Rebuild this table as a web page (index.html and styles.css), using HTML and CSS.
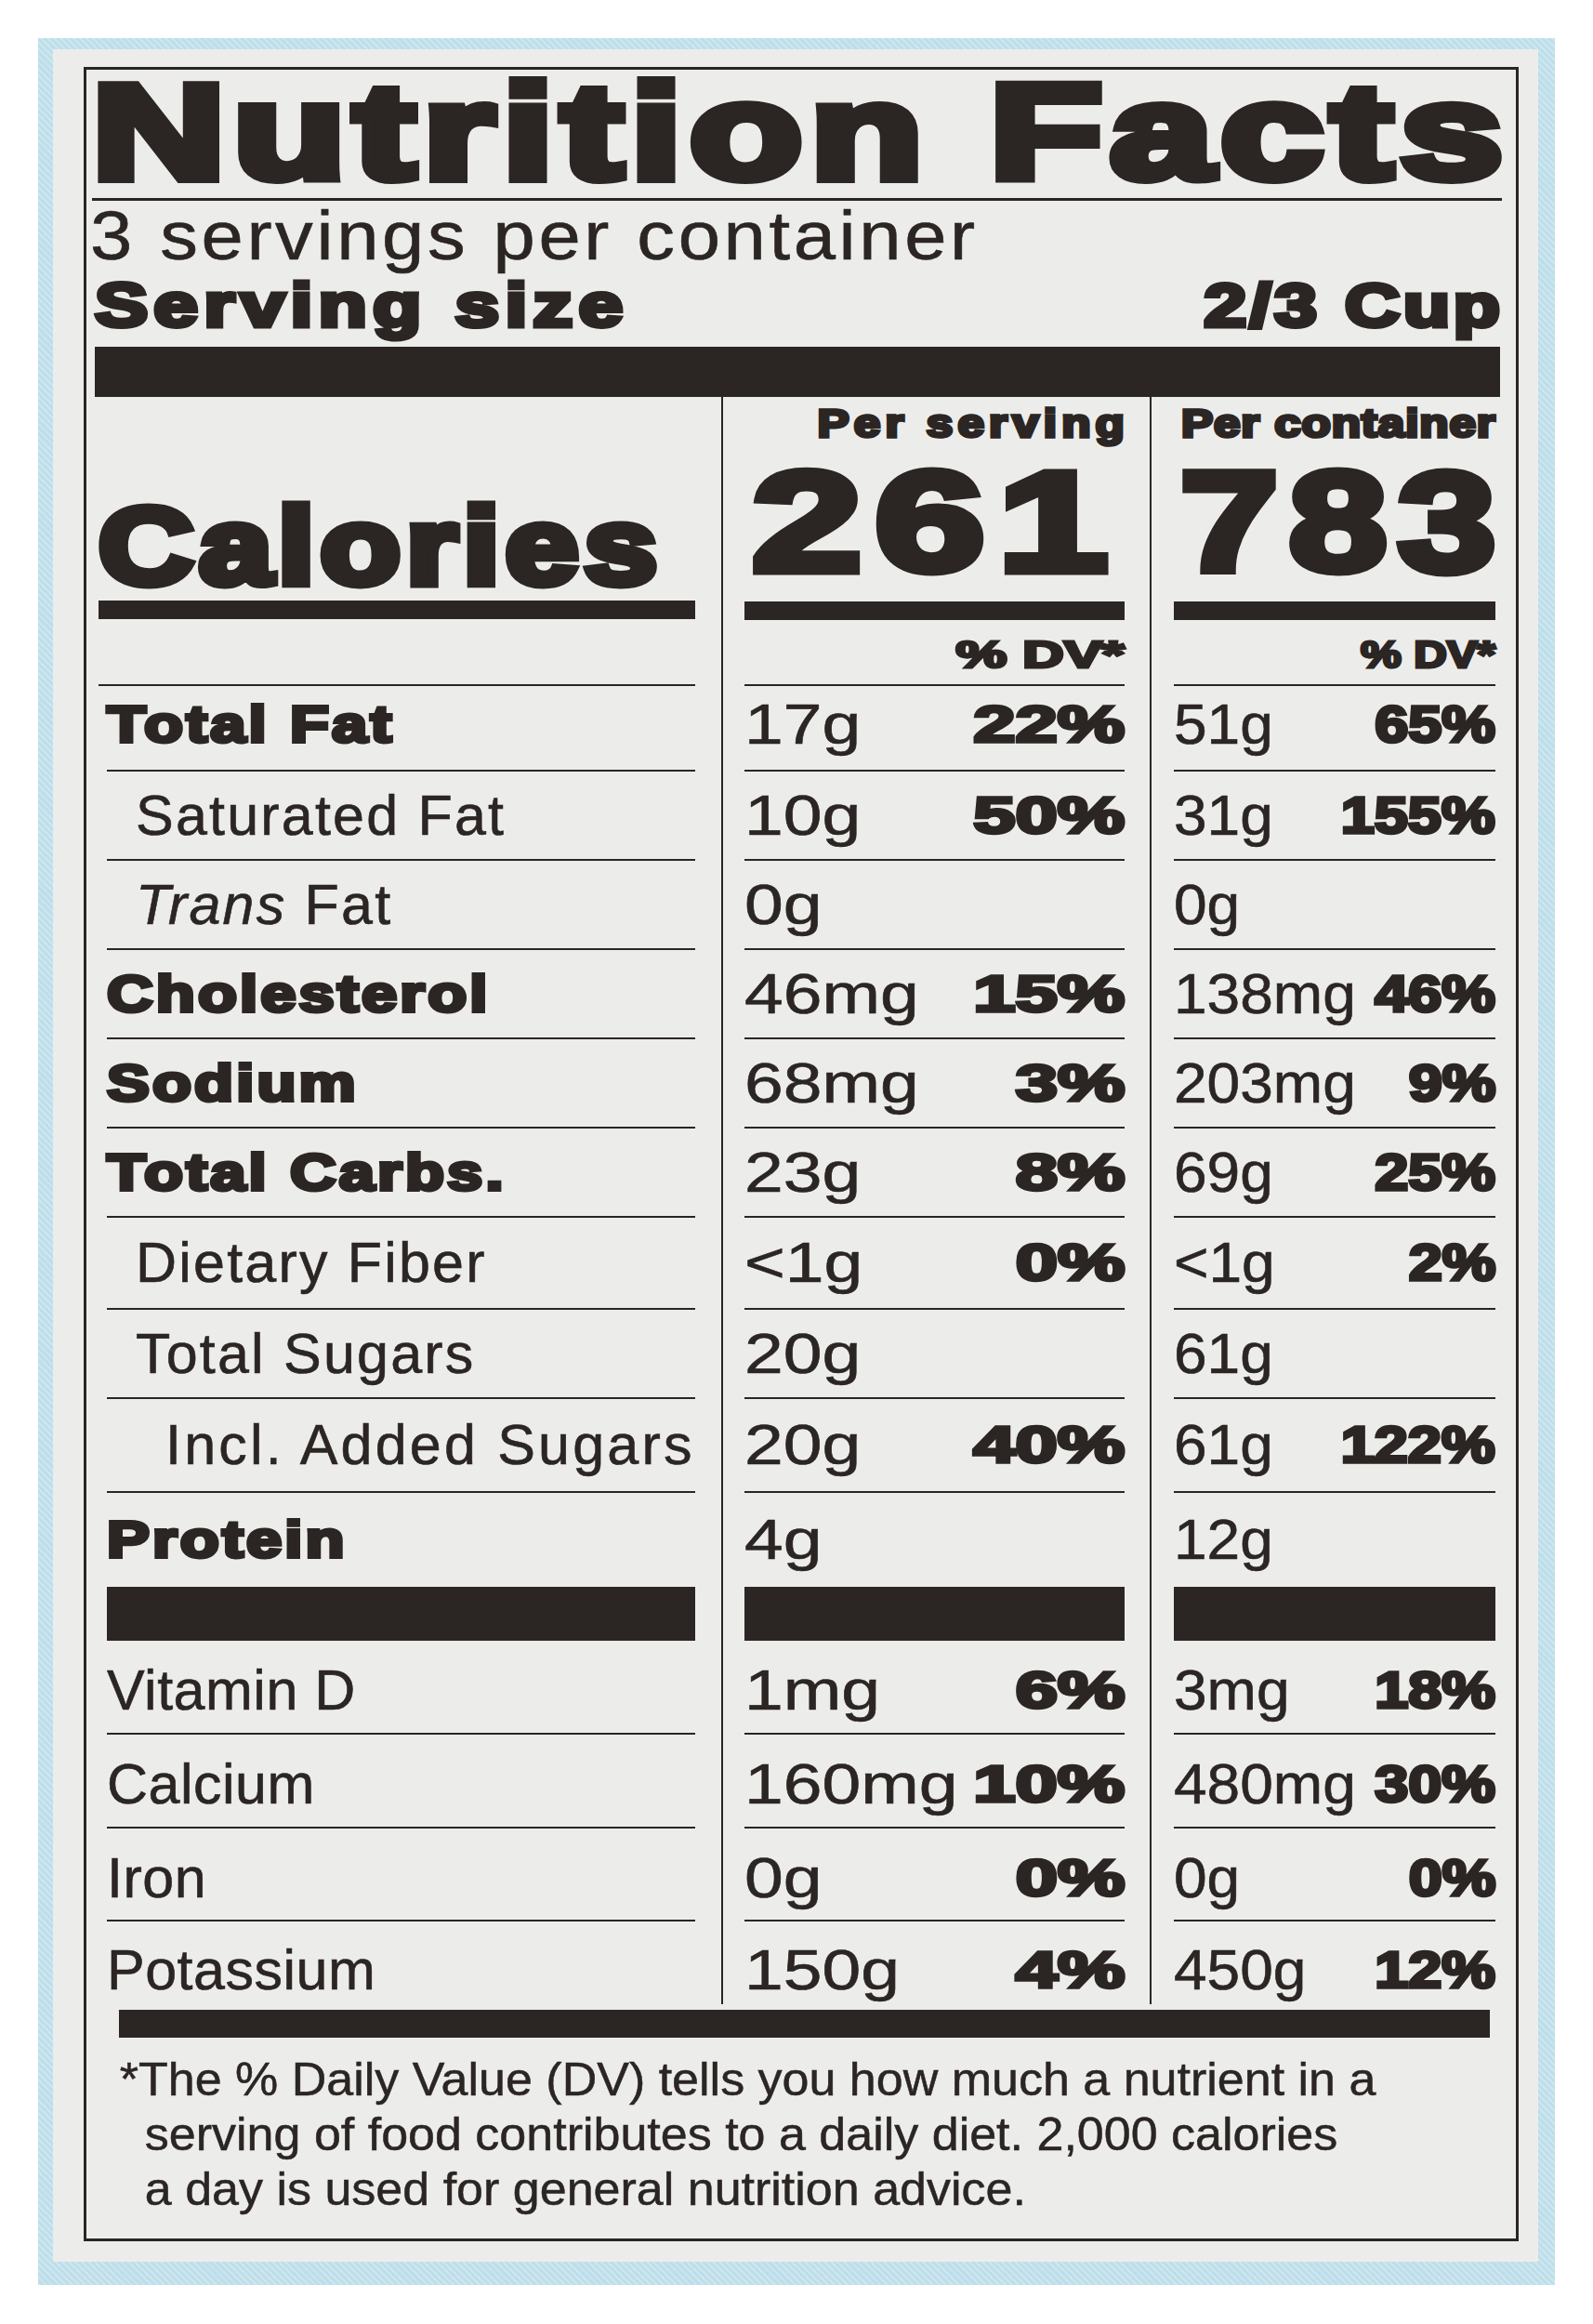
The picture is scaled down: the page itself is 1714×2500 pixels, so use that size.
FILE: index.html
```html
<!DOCTYPE html>
<html lang="en">
<head>
<meta charset="utf-8">
<title>Nutrition Facts</title>
<link rel="stylesheet" href="styles.css">
</head>
<body>
<main class="frame">
  <div class="panel">
    <section class="label">
      <h1 class="title"><span class="hv">Nutrition Facts</span></h1>
      <div class="rule"></div>
      <p class="servings"><span class="sx">3 servings per container</span></p>
      <div class="size">
        <span class="hv size-label">Serving size</span>
        <span class="hv r size-val">2/3 Cup</span>
      </div>
      <div class="bar-top"></div>

      <div class="table">
        <div class="row head">
          <div class="cell c1"><div class="in">
            <span class="hv cal">Calories</span>
            <div class="cal-bar"></div>
          </div></div>
          <div class="cell c2"><div class="in">
            <span class="hv r per">Per serving</span>
            <span class="hv num">261</span>
            <div class="cal-bar"></div>
            <span class="hv r dv">% DV*</span>
          </div></div>
          <div class="cell c3"><div class="in">
            <span class="hv r per">Per container</span>
            <span class="hv r num">783</span>
            <div class="cal-bar"></div>
            <span class="hv r dv">% DV*</span>
          </div></div>
        </div>

        <div class="row s">
          <div class="cell c1"><div class="in"><span class="hv nut">Total Fat</span></div></div>
          <div class="cell c2"><div class="in"><span class="v">17g</span><span class="hv r pct">22%</span></div></div>
          <div class="cell c3"><div class="in"><span class="v">51g</span><span class="hv r pct">65%</span></div></div>
        </div>
        <div class="row">
          <div class="cell c1"><div class="in"><span class="lbl sub">Saturated Fat</span></div></div>
          <div class="cell c2"><div class="in"><span class="v">10g</span><span class="hv r pct">50%</span></div></div>
          <div class="cell c3"><div class="in"><span class="v">31g</span><span class="hv r pct">155%</span></div></div>
        </div>
        <div class="row">
          <div class="cell c1"><div class="in"><span class="lbl sub"><i>Trans</i> Fat</span></div></div>
          <div class="cell c2"><div class="in"><span class="v">0g</span></div></div>
          <div class="cell c3"><div class="in"><span class="v">0g</span></div></div>
        </div>
        <div class="row">
          <div class="cell c1"><div class="in"><span class="hv nut">Cholesterol</span></div></div>
          <div class="cell c2"><div class="in"><span class="v">46mg</span><span class="hv r pct">15%</span></div></div>
          <div class="cell c3"><div class="in"><span class="v">138mg</span><span class="hv r pct">46%</span></div></div>
        </div>
        <div class="row">
          <div class="cell c1"><div class="in"><span class="hv nut">Sodium</span></div></div>
          <div class="cell c2"><div class="in"><span class="v">68mg</span><span class="hv r pct">3%</span></div></div>
          <div class="cell c3"><div class="in"><span class="v">203mg</span><span class="hv r pct">9%</span></div></div>
        </div>
        <div class="row">
          <div class="cell c1"><div class="in"><span class="hv nut">Total Carbs.</span></div></div>
          <div class="cell c2"><div class="in"><span class="v">23g</span><span class="hv r pct">8%</span></div></div>
          <div class="cell c3"><div class="in"><span class="v">69g</span><span class="hv r pct">25%</span></div></div>
        </div>
        <div class="row l">
          <div class="cell c1"><div class="in"><span class="lbl sub">Dietary Fiber</span></div></div>
          <div class="cell c2"><div class="in"><span class="v">&lt;1g</span><span class="hv r pct">0%</span></div></div>
          <div class="cell c3"><div class="in"><span class="v">&lt;1g</span><span class="hv r pct">2%</span></div></div>
        </div>
        <div class="row">
          <div class="cell c1"><div class="in"><span class="lbl sub">Total Sugars</span></div></div>
          <div class="cell c2"><div class="in"><span class="v">20g</span></div></div>
          <div class="cell c3"><div class="in"><span class="v">61g</span></div></div>
        </div>
        <div class="row xl">
          <div class="cell c1"><div class="in"><span class="lbl sub2">Incl. Added Sugars</span></div></div>
          <div class="cell c2"><div class="in"><span class="v">20g</span><span class="hv r pct">40%</span></div></div>
          <div class="cell c3"><div class="in"><span class="v">61g</span><span class="hv r pct">122%</span></div></div>
        </div>
        <div class="row xl nl">
          <div class="cell c1"><div class="in"><span class="hv nut">Protein</span></div></div>
          <div class="cell c2"><div class="in"><span class="v">4g</span></div></div>
          <div class="cell c3"><div class="in"><span class="v">12g</span></div></div>
        </div>
        <div class="row bar">
          <div class="cell c1"><div class="in"></div></div>
          <div class="cell c2"><div class="in"></div></div>
          <div class="cell c3"><div class="in"></div></div>
        </div>
        <div class="row xl lo">
          <div class="cell c1"><div class="in"><span class="lbl">Vitamin D</span></div></div>
          <div class="cell c2"><div class="in"><span class="v">1mg</span><span class="hv r pct">6%</span></div></div>
          <div class="cell c3"><div class="in"><span class="v">3mg</span><span class="hv r pct">18%</span></div></div>
        </div>
        <div class="row xl lo">
          <div class="cell c1"><div class="in"><span class="lbl">Calcium</span></div></div>
          <div class="cell c2"><div class="in"><span class="v">160mg</span><span class="hv r pct">10%</span></div></div>
          <div class="cell c3"><div class="in"><span class="v">480mg</span><span class="hv r pct">30%</span></div></div>
        </div>
        <div class="row m lo">
          <div class="cell c1"><div class="in"><span class="lbl">Iron</span></div></div>
          <div class="cell c2"><div class="in"><span class="v">0g</span><span class="hv r pct">0%</span></div></div>
          <div class="cell c3"><div class="in"><span class="v">0g</span><span class="hv r pct">0%</span></div></div>
        </div>
        <div class="row end nl">
          <div class="cell c1"><div class="in"><span class="lbl">Potassium</span></div></div>
          <div class="cell c2"><div class="in"><span class="v">150g</span><span class="hv r pct">4%</span></div></div>
          <div class="cell c3"><div class="in"><span class="v">450g</span><span class="hv r pct">12%</span></div></div>
        </div>
      </div>

      <div class="bar-bottom"></div>
      <p class="foot">*The % Daily Value (DV) tells you how much a nutrient in a<br>serving of food contributes to a daily diet. 2,000 calories<br>a day is used for general nutrition advice.</p>
    </section>
  </div>
</main>
</body>
</html>
```

FILE: styles.css
```css
* { box-sizing: border-box; margin: 0; padding: 0; }

html, body { background: #ffffff; }

body {
  --ink: #2b2523;
  font-family: "Liberation Sans", Arial, Helvetica, sans-serif;
  color: var(--ink);
}

/* blue package edge */
.frame {
  display: block;
  margin: 41px 0 0 41px;
  width: 1632px;
  padding: 12px 18px 25px 16px;
  background-color: #bddeea;
  background-image: repeating-linear-gradient(45deg, rgba(255,255,255,0.25) 0 2px, rgba(255,255,255,0) 2px 5px);
}

.panel {
  background: #ecedeb;
  padding: 19px 21px 22px 33px;
}

.label {
  border: 3px solid var(--ink);
  padding: 0 22px 23px 22px;
}

/* heavy, expanded type */
.hv {
  display: inline-block;
  font-weight: 700;
  white-space: nowrap;
  -webkit-text-stroke: var(--s, 0px) currentColor;
  letter-spacing: var(--ls, 0px);
  transform: scaleX(var(--k, 1));
  transform-origin: 0 50%;
}
.hv.r {
  transform-origin: 100% 50%;
  margin-right: calc(var(--ls, 0px) * var(--k, 1) * -1);
}

/* header */
.title { display: flex; height: 136px; }
.title .hv {
  font-size: 144px;
  line-height: 136px;
  --s: 10px;
  --k: 1.38;
  --ls: 6px;
  margin-left: -16px;
}

.rule {
  height: 3px;
  background: var(--ink);
  margin: 2px -7px 0 -16px;
}

.servings {
  display: flex;
  margin: 6px 0 0 -18px;
  height: 64px;
}
.sx {
  display: inline-block;
  font-size: 74px;
  line-height: 64px;
  letter-spacing: 3.3px;
  white-space: nowrap;
  -webkit-text-stroke: 0.6px currentColor;
  transform: scaleX(1.1);
  transform-origin: 0 50%;
}

.size {
  display: flex;
  justify-content: space-between;
  align-items: baseline;
  height: 62px;
  margin: 11px -5px 0 -13px;
}
.size-label { font-size: 67px; line-height: 62px; --s: 5px; --k: 1.28; --ls: 4.8px; }
.size-val { font-size: 64px; line-height: 62px; --s: 5px; --k: 1.28; --ls: 2.9px; }

.bar-top {
  height: 54px;
  background: var(--ink);
  margin: 14px -5px 0 -13px;
}

/* table */
.row {
  display: grid;
  grid-template-columns: 661px 461px 372px;
  height: 96px;
}
.row.s { height: 92px; }
.row.l { height: 99px; }
.row.xl { height: 101px; }
.row.m { height: 100px; }
.row.end { height: 89px; }
.row.bar { height: 58px; }

.cell { height: 100%; }
.c1 { padding-right: 28px; }
.c2 { border-left: 2px solid var(--ink); padding: 0 27px 0 23px; }
.c3 { border-left: 2px solid var(--ink); padding-left: 24px; }

.in {
  height: 100%;
  display: flex;
  align-items: center;
  justify-content: space-between;
  border-bottom: 2px solid var(--ink);
}
.c1 .in { justify-content: flex-start; }
.row.nl .in { border-bottom: 0; }
.row.bar .in { border-bottom: 0; background: var(--ink); }
.row.s .in { padding-bottom: 8px; }
.row.lo .in { padding-top: 8px; }
.row.end .in { padding-top: 16px; }

/* header row with calories */
.row.head { height: 311px; }
.row.head .in {
  flex-direction: column;
  align-items: stretch;
  justify-content: flex-start;
}
.row.head .c1 .in {
  justify-content: flex-end;
  padding-bottom: 70px;
  margin-left: -9px;
}
.cal-bar { height: 20px; background: var(--ink); }
.c2 .cal-bar, .c3 .cal-bar { margin-top: 10px; }

.cal {
  align-self: flex-start;
  font-size: 116px;
  line-height: 116px;
  --s: 9px;
  --k: 1.22;
  --ls: 5px;
}
.per {
  align-self: flex-end;
  margin-top: 8px;
  height: 41px;
  font-size: 42px;
  line-height: 41px;
  --s: 3.5px;
  --k: 1.22;
}
.c2 .per { --ls: 4.2px; }
.c3 .per { --ls: 0.7px; }

.num {
  margin-top: 9px;
  font-size: 152px;
  line-height: 152px;
  --s: 9px;
}
.c2 .num { align-self: flex-start; margin-left: 8px; --k: 1.4; --ls: 10px; }
.c3 .num { align-self: flex-end; --k: 1.25; --ls: 9px; }

.dv {
  align-self: flex-end;
  margin-top: 19px;
  height: 36px;
  font-size: 40px;
  line-height: 36px;
  --s: 3px;
}
.c2 .dv { --k: 1.54; }
.c3 .dv { --k: 1.23; }

/* nutrient rows */
.nut {
  font-size: 55px;
  line-height: 55px;
  --s: 4px;
  --k: 1.25;
  --ls: 2.5px;
}
.lbl {
  font-size: 61px;
  line-height: 61px;
  letter-spacing: 0.5px;
  white-space: nowrap;
  -webkit-text-stroke: 0.6px currentColor;
}
.lbl.sub { padding-left: 31px; letter-spacing: 2.2px; }
.lbl.sub2 { padding-left: 63px; letter-spacing: 3.2px; }

.v {
  display: inline-block;
  font-size: 61px;
  line-height: 61px;
  white-space: nowrap;
  -webkit-text-stroke: 0.6px currentColor;
  transform: scaleX(var(--k, 1));
  transform-origin: 0 50%;
}
.c2 .v { --k: 1.23; }
.c3 .v { --k: 1.05; }

.pct {
  font-size: 55px;
  line-height: 55px;
  --s: 3.5px;
}
.c2 .pct { --k: 1.48; }
.c3 .pct { --k: 1.18; }

/* footer */
.bar-bottom {
  height: 30px;
  background: var(--ink);
  margin: 6px 6px 0 13px;
}

.foot {
  margin: 16px 0 0 -6px;
  padding-left: 45px;
  text-indent: -26px;
  font-size: 50px;
  line-height: 59px;
  white-space: nowrap;
  -webkit-text-stroke: 0.5px currentColor;
  transform: scaleX(1.04);
  transform-origin: 0 0;
}
```
